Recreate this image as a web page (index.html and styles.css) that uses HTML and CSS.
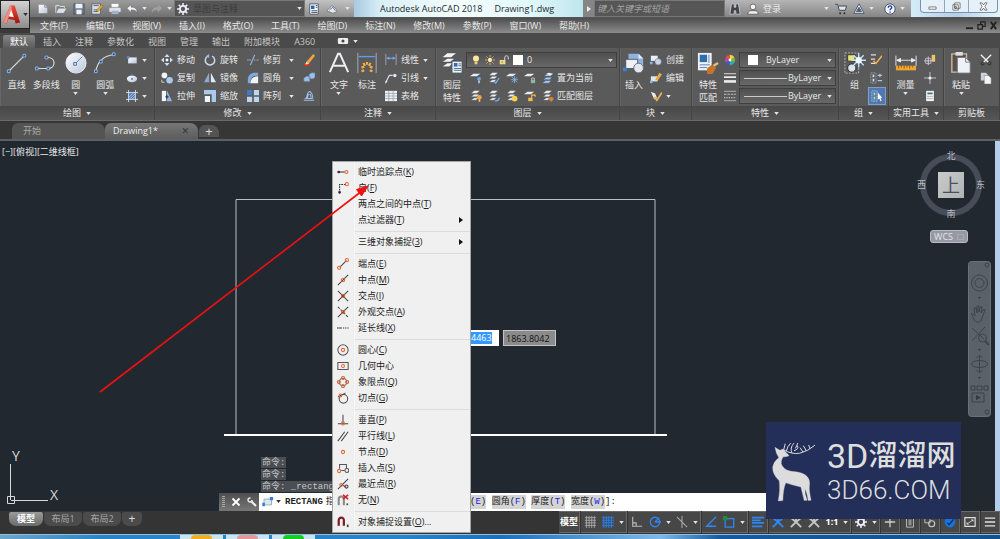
FILE: index.html
```
<!DOCTYPE html>
<html lang="zh-CN">
<head>
<meta charset="utf-8">
<title>Autodesk AutoCAD 2018 - Drawing1.dwg</title>
<link rel="stylesheet" href="styles.css">
</head>
<body>
<svg class="sprite" aria-hidden="true">
  <defs>
    <linearGradient id="g-white" x1="0" y1="0" x2="1" y2="1"><stop offset="0" stop-color="#fff"/><stop offset="1" stop-color="#b9c6d6"/></linearGradient>
    <linearGradient id="g-red" x1="0" y1="0" x2="0" y2="1"><stop offset="0" stop-color="#e8503c"/><stop offset="1" stop-color="#a8100c"/></linearGradient>
  </defs>
  <symbol id="down" viewBox="0 0 6 4"><path d="M0 0h6L3 4z" fill="#e4e4e4"/></symbol>
  <symbol id="new" viewBox="0 0 14 14"><path d="M2 2h7l3 3v7H2z" fill="url(#g-white)"/><path d="M9 2v3h3" fill="none" stroke="#667" stroke-width=".7"/></symbol>
  <symbol id="open" viewBox="0 0 14 14"><path d="M1 12V3h4l1 1h5v2" fill="none" stroke="#e8edf2"/><path d="M1 12l3-6h10l-4 6z" fill="#dbe4ec" stroke="#556" stroke-width=".5"/></symbol>
  <symbol id="save" viewBox="0 0 14 14"><path d="M1 1h12v12H1z" fill="#6d7c90" stroke="#39414d" stroke-width=".7"/><path d="M3 1h8v5H3zM4 8h6v5H4z" fill="#eef2f6"/></symbol>
  <symbol id="saveas" viewBox="0 0 14 14"><path d="M1 1h10v12H1z" fill="#d8dee6" stroke="#39414d" stroke-width=".7"/><path d="M3 3h6M3 8h5M3 10h5" stroke="#456"/><path d="M6 9l6-7 2 2-6 6z" fill="#f1a532" stroke="#7a4a10" stroke-width=".5"/></symbol>
  <symbol id="print" viewBox="0 0 14 14"><path d="M3 1h8v5H3z" fill="#fff"/><path d="M0 5h14v6H0z" fill="#dce2e8" stroke="#556" stroke-width=".6"/><path d="M3 9h8v4H3z" fill="#9fb4cc"/></symbol>
  <symbol id="undo" viewBox="0 0 14 14"><path d="M1 6l5-4v3c5 0 7 2 7 7-1-3-3-4-7-4v3z" fill="#f1f4f7" stroke="#556" stroke-width=".5"/></symbol>
  <symbol id="redo" viewBox="0 0 14 14"><path d="M13 6L8 2v3c-5 0-7 2-7 7 1-3 3-4 7-4v3z" fill="#a0a0a0"/></symbol>
  <symbol id="gear" viewBox="0 0 14 14"><circle cx="7" cy="7" r="3.600" fill="none" stroke="#eef" stroke-width="2.200"/><path d="M7 0v3M7 11v3M0 7h3M11 7h3M2 2l2 2M10 10l2 2M12 2l-2 2M4 10l-2 2" stroke="#eef" stroke-width="1.800"/></symbol>
  <symbol id="sheet" viewBox="0 0 14 14"><path d="M2 1h10v12H2z" fill="#f5f7fa" stroke="#456"/><path d="M3.500 3h4v4h-4z" fill="#2c65a8"/><path d="M9 3h2M9 5h2M4 9h7M4 11h7" stroke="#345"/></symbol>
  <symbol id="plotter" viewBox="0 0 14 14"><path d="M1 9l6-6 4 3 2 4-5 2z" fill="#e1e7ec" stroke="#556" stroke-width=".7"/><path d="M4 8l4-3 3 4" fill="none" stroke="#668"/></symbol>
  <symbol id="binoc" viewBox="0 0 14 14"><path d="M3 1h3v4h2V1h3l2 12H8V9H6v4H1z" fill="#3f4348" stroke="#eee" stroke-width=".7"/></symbol>
  <symbol id="user" viewBox="0 0 14 14"><circle cx="7" cy="4.500" r="3.300" fill="#f5f5f5" stroke="#444" stroke-width=".8"/><path d="M1 13c0-4 3-4 6-4s6 0 6 4z" fill="#f5f5f5" stroke="#444" stroke-width=".8"/></symbol>
  <symbol id="cart" viewBox="0 0 14 14"><path d="M0 1.500h3l2 7h7l1.500-5H4" fill="#dfe6ee" stroke="#3c4550" stroke-width="1.100"/><circle cx="6" cy="12" r="1.200" fill="#333"/><circle cx="11" cy="12" r="1.200" fill="#333"/></symbol>
  <symbol id="share" viewBox="0 0 14 14"><path d="M7 1l6 11H1zM7 5l3 5H4z" fill="#e8eef5" fill-rule="evenodd" stroke="#3c4c66"/><circle cx="7" cy="8" r="1.500" fill="#557"/></symbol>
  <symbol id="help" viewBox="0 0 14 14"><circle cx="7" cy="7" r="6" fill="#f4f7fb" stroke="#32435c"/><path d="M5 5.500C5 2.500 9.200 2.800 9 5.300 8.900 6.800 7 6.800 7 8.600M7 9.800v1.500" fill="none" stroke="#1c3fae" stroke-width="1.600"/></symbol>
  <symbol id="camera" viewBox="0 0 14 8"><rect x="1" y="0" width="12" height="7" rx="1.500" fill="#eee"/><circle cx="7" cy="3.500" r="1.800" fill="#444"/></symbol>

  <symbol id="line" viewBox="0 0 24 24"><path d="M3 21L20 4" stroke="#d6dadd" stroke-width="1.200"/><path d="M1.500 19.500h3v3h-3zM18.500 2.500h3v3h-3z" fill="#2f4a70" stroke="#8fbcf2"/></symbol>
  <symbol id="pline" viewBox="0 0 24 24"><path d="M2 18h12c9 0 9-12 0-12" fill="none" stroke="#d6dadd" stroke-width="1.300"/><path d="M.5 16.500h3v3h-3zM13 16.500h3v3h-3zM11 4.500h3v3h-3z" fill="#2f4a70" stroke="#8fbcf2"/></symbol>
  <symbol id="circle" viewBox="0 0 24 24"><circle cx="12" cy="12" r="11" fill="url(#g-white)" stroke="#eef"/><path d="M11 13l8-8" stroke="#4f83c4"/><path d="M9.500 11.500h3v3h-3z" fill="#dbe9fb" stroke="#3c6fb0"/></symbol>
  <symbol id="arc" viewBox="0 0 24 24"><path d="M2 21C4 10 10 4 22 3" fill="none" stroke="#d6dadd" stroke-width="1.300"/><path d="M.5 19.500h3v3h-3zM6 9h3v3H6zM20 1h3v3h-3z" fill="#2f4a70" stroke="#8fbcf2"/></symbol>
  <symbol id="rect" viewBox="0 0 14 14"><path d="M2.500 4h10v7h-10z" fill="url(#g-white)"/><path d="M1 2.500h3v3H1z" fill="#5b8dcc"/></symbol>
  <symbol id="ellipse" viewBox="0 0 14 14"><ellipse cx="7" cy="8" rx="6" ry="4" fill="url(#g-white)"/><path d="M6 7h2v2H6zM6 2h2v2H6z" fill="#4a80c6"/></symbol>
  <symbol id="hatch" viewBox="0 0 14 14"><path d="M3 3h8v8H3z" fill="#5580b5"/><path d="M3 0v14M11 0v14M0 3h14M0 11h14" stroke="#dce8f6"/><path d="M3 9l6-6M4 11l7-7M7 11l4-4" stroke="#a9caf0"/></symbol>
  <symbol id="move" viewBox="0 0 14 14"><path d="M7 0l3 3.500H4zM7 14l3-3.500H4zM0 7l3.500-3v6zM14 7l-3.500-3v6z" fill="#c9dcf5"/><path d="M5.500 5.500h3v3h-3z" fill="#fff"/></symbol>
  <symbol id="rotate" viewBox="0 0 14 14"><path d="M4.500 2.500a5.500 5.500 0 1 0 5 0" fill="none" stroke="#c9dcf0" stroke-width="1.700"/><path d="M6 0v5L3 2z" fill="#8fbcf2"/></symbol>
  <symbol id="trim" viewBox="0 0 14 14"><path d="M4 13l5-12" stroke="#8fbcf2" stroke-width="1.300"/><path d="M0 7h5M8 7h2M11 7h3" stroke="#aaa"/></symbol>
  <symbol id="erase" viewBox="0 0 14 14"><path d="M4 9l8-9 2 2-7 9z" fill="#f4a33a"/><path d="M4 9l3 2-2 2H2z" fill="#f3e4c8"/><path d="M1 13h7" stroke="#e12e1c" stroke-width="2"/></symbol>
  <symbol id="copy" viewBox="0 0 14 14"><circle cx="4" cy="4" r="3.300" fill="#f0f3f7"/><circle cx="10" cy="9.500" r="3.800" fill="#a9c9f0"/><path d="M1 9v3h3" fill="none" stroke="#ddd"/></symbol>
  <symbol id="mirror" viewBox="0 0 14 14"><path d="M6 1v11H0z" fill="#8fa9c6"/><path d="M8 1v11h6z" fill="#dfe9f4"/></symbol>
  <symbol id="fillet" viewBox="0 0 14 14"><path d="M1 13V9C1 4 5 1 9 1h4v3C8 4 4 6 4 13z" fill="#7fa9da"/><path d="M4 13c0-5 3-8 9-8v8z" fill="#f0f3f6"/></symbol>
  <symbol id="explode" viewBox="0 0 14 14"><path d="M1 7l3-2h4v6H1zM7 3l3-2h4v5l-2 2H7z" fill="#9cc0ea" stroke="#56759c" stroke-width=".6"/></symbol>
  <symbol id="stretch" viewBox="0 0 14 14"><path d="M1 1h5v12H1z" fill="#f2f4f7"/><path d="M7 1l6 12H7z" fill="#8fb5e4"/><path d="M5 8h4M7 6v4" stroke="#222"/></symbol>
  <symbol id="scale" viewBox="0 0 14 14"><path d="M0 0h14v14h-5V5H0z" fill="#a9c9ee"/><path d="M1 7h6v7H1z" fill="#f1f5f9"/></symbol>
  <symbol id="array" viewBox="0 0 14 14"><path d="M0 0h6v6H0z" fill="#4379c4"/><path d="M8 0h6v6H8zM0 8h6v6H0zM8 8h6v6H8z" fill="#bcd5f3"/></symbol>
  <symbol id="offset" viewBox="0 0 14 14"><path d="M1 12h12M3 10c3-2 1-7 4-8s5 6 4 8zM5 10c1-2 0-4 2-5s3 3 2 5" fill="none" stroke="#9bbde6" stroke-width="1.200"/></symbol>

  <symbol id="text" viewBox="0 0 24 24"><path d="M2 22L11 2h2l9 20M5.500 15h13" fill="none" stroke="#eceff2" stroke-width="2.200"/></symbol>
  <symbol id="dim" viewBox="0 0 24 24"><path d="M2 1v22M22 1v22" stroke="#aeb5bc"/><path d="M3 5h18" stroke="#5f9cec" stroke-width="1.500"/><path d="M6 17l3-1M8 12l2 3M12 11v3M16 12l-2 3M18 17l-3-1M6 21l3-1M18 21l-3-1" stroke="#f2ae42" stroke-width="2.400"/></symbol>
  <symbol id="linear" viewBox="0 0 14 14"><path d="M1 0v13M13 0v13" stroke="#aab"/><path d="M2 5h10" stroke="#5f9cec" stroke-width="1.500"/><path d="M2 5l3-2v4zM12 5L9 3v4z" fill="#79adf0"/></symbol>
  <symbol id="leader" viewBox="0 0 14 14"><path d="M1 12L5 4h4" fill="none" stroke="#dde" stroke-width="1.300"/><circle cx="11.500" cy="4" r="2" fill="#dce9f8"/><path d="M0 14l1-4 2 1z" fill="#eee"/></symbol>
  <symbol id="table" viewBox="0 0 14 14"><path d="M0 1h14v12H0z" fill="#eef1f4"/><path d="M0 4h14M0 7h14M0 10h14M4.500 1v12M9.500 1v12" stroke="#8a99aa" stroke-width=".8"/></symbol>
  <symbol id="layerprop" viewBox="0 0 24 24"><path d="M1 6l6-5h10l-6 5zM1 11l6-4h8l-5 4zM1 16l6-4h6l-4 4z" fill="#f1f3f5" stroke="#444" stroke-width=".5"/><path d="M12 10h11v13H12z" fill="#f3f5f8" stroke="#456"/><path d="M14 12h4v4h-4z" fill="#2e6db8"/><path d="M19 13h3M19 15h3M14 18h8M14 20h8" stroke="#468"/></symbol>
  <symbol id="bulb" viewBox="0 0 14 14"><circle cx="7" cy="5" r="4.200" fill="#ffe79a"/><path d="M5 9h4v4H5z" fill="#e4c98a"/></symbol>
  <symbol id="sun" viewBox="0 0 14 14"><circle cx="7" cy="7" r="3" fill="#ffe9a6"/><path d="M7 0v3M7 11v3M0 7h3M11 7h3M2 2l2 2M10 10l2 2M12 2l-2 2M4 10l-2 2" stroke="#f0cf80"/></symbol>
  <symbol id="lock" viewBox="0 0 14 14"><path d="M1 7h8v6H1z" fill="#f1da8a"/><path d="M8 7V4c0-4 5-4 5 0v2" fill="none" stroke="#d7d7d7" stroke-width="1.400"/><path d="M4.500 9v2" stroke="#543"/></symbol>
  <symbol id="stack" viewBox="0 0 14 14"><path d="M1 4l4-3.500h7L8 4zM1 8l4-3h6L8 8zM1 12l4-3h5l-3 3z" fill="#e9edf1" stroke="#41464b" stroke-width=".5"/></symbol>
  <symbol id="lay-off" viewBox="0 0 14 14"><path d="M0 5l4-3h8L8 5z" fill="#e8ecf0"/><circle cx="10.500" cy="8" r="2.300" fill="#69a4ea"/><path d="M9.500 10h2v3h-2z" fill="#a8c8ee"/></symbol>
  <symbol id="lay-iso" viewBox="0 0 14 14"><use href="#stack"/><path d="M7 11l2 2 4-6" fill="none" stroke="#74aef2" stroke-width="1.500"/></symbol>
  <symbol id="lay-frz" viewBox="0 0 14 14"><path d="M0 5l4-3h8L8 5z" fill="#e8ecf0"/><path d="M10 5v8M6 9h8M7 6l6 6M13 6l-6 6" stroke="#7db4f2"/></symbol>
  <symbol id="lay-lock" viewBox="0 0 14 14"><path d="M0 5l4-3h8L8 5z" fill="#e8ecf0"/><path d="M8 9h5v4H8z" fill="#8eb79c"/><path d="M9 9V7h3v2" fill="none" stroke="#ccd"/></symbol>
  <symbol id="lay-cur" viewBox="0 0 14 14"><path d="M2 5l4-3h7l-3 3zM1 9l4-3h7l-3 3zM0 13l4-3h7l-3 3z" fill="#a9c8ee" stroke="#3c4a5a" stroke-width=".5"/><path d="M5 2l3-1 5 1-4 2z" fill="#eee"/></symbol>
  <symbol id="lay-on" viewBox="0 0 14 14"><use href="#stack"/><circle cx="11" cy="8.500" r="2.600" fill="#f5a93c"/><path d="M10 11h2v2.500h-2z" fill="#f3d694"/></symbol>
  <symbol id="lay-uniso" viewBox="0 0 14 14"><use href="#stack"/><path d="M13 9c0 3-2 4-5 4" fill="none" stroke="#74aef2" stroke-width="1.600"/></symbol>
  <symbol id="lay-thaw" viewBox="0 0 14 14"><use href="#stack"/><circle cx="10" cy="10" r="3.400" fill="#f6cf4e"/></symbol>
  <symbol id="lay-unlock" viewBox="0 0 14 14"><path d="M0 5l4-3h8L8 5z" fill="#e8ecf0"/><path d="M5 9h5v4H5z" fill="#f2c04a"/><path d="M9 9V6h4v2" fill="none" stroke="#f2c04a" stroke-width="1.300"/></symbol>
  <symbol id="lay-match" viewBox="0 0 14 14"><use href="#stack"/><path d="M7 10l4-2 3 2-3 4z" fill="#d9842e"/></symbol>
  <symbol id="insert" viewBox="0 0 24 24"><path d="M6 2h11l5 5v11H6z" fill="#8fb3de"/><path d="M17 2v5h5" fill="#e4eefa"/><path d="M3 8h13v10H3z" fill="#eef1f5" stroke="#556"/><circle cx="17" cy="17.500" r="5.300" fill="#e2e7ee" stroke="#667"/><path d="M0 17h4v4H0z" fill="#3f7fd4"/></symbol>
  <symbol id="create" viewBox="0 0 14 14"><path d="M1 2h8v6H1z" fill="#eceff3"/><circle cx="9.500" cy="9" r="3.800" fill="#c5d3e3" stroke="#667" stroke-width=".6"/><path d="M0 9h3v3H0z" fill="#8bb5e8"/></symbol>
  <symbol id="editb" viewBox="0 0 14 14"><path d="M1 5h8v6H1z" fill="#dfe5ec"/><path d="M6 9l5-8 3 2-5 7z" fill="#f0a73e"/><path d="M0 10h3v3H0z" fill="#8bb5e8"/></symbol>
  <symbol id="attr" viewBox="0 0 14 14"><path d="M1 2l5 2 2 5-3 2z" fill="#eee"/><path d="M5 8l3 4 6-9" fill="none" stroke="#f0b350" stroke-width="2"/></symbol>
  <symbol id="matchp" viewBox="0 0 24 24"><path d="M1 1h15v19H1z" fill="#eef1f5"/><path d="M3 3h8v8H3z" fill="#2f6ead"/><path d="M13 3v9M3 14h11M3 17h8" stroke="#557fae"/><path d="M11 18l5-4 5 3-4 7h-6z" fill="#c4752a"/><path d="M18 15l5-3" stroke="#e7c079" stroke-width="2.500"/></symbol>
  <symbol id="wheel" viewBox="0 0 14 14"><path d="M7 7V1a6 6 0 0 1 5.200 3z" fill="#f3d53d"/><path d="M7 7l5.200-3a6 6 0 0 1 0 6z" fill="#6cbf4a"/><path d="M7 7l5.200 3A6 6 0 0 1 7 13z" fill="#39a9b8"/><path d="M7 7v6a6 6 0 0 1-5.200-3z" fill="#3961c4"/><path d="M7 7l-5.200 3a6 6 0 0 1 0-6z" fill="#b04aa8"/><path d="M7 7L1.800 4A6 6 0 0 1 7 1z" fill="#e5533b"/><circle cx="7" cy="7" r="1.700" fill="#fff"/></symbol>
  <symbol id="lw" viewBox="0 0 14 14"><path d="M0 2h14" stroke="#eee"/><path d="M0 6h14" stroke="#eee" stroke-width="2"/><path d="M0 11h14" stroke="#eee" stroke-width="3"/></symbol>
  <symbol id="lt" viewBox="0 0 14 14"><path d="M0 1.500h14M0 12.500h14" stroke="#bbb"/><path d="M0 5h14" stroke="#ccc" stroke-dasharray="3 1"/><path d="M0 9h14" stroke="#ccc" stroke-width="1.500" stroke-dasharray="1 1"/></symbol>
  <symbol id="group" viewBox="0 0 24 24"><path d="M1 1h15v22H1z" fill="none" stroke="#bbb" stroke-dasharray="2 1.500"/><path d="M4 3h8v7H4z" fill="#e9e27a" stroke="#333"/><circle cx="8.500" cy="17.500" r="4.500" fill="#dde5ee" stroke="#222"/><path d="M16 1v16M8 9h16M10.500 3.500l11 11M21.500 3.500l-11 11" stroke="#bfe0ff" stroke-width="1.500"/><circle cx="16" cy="9" r="3.500" fill="#eef8ff"/></symbol>
  <symbol id="ungroup" viewBox="0 0 14 14"><path d="M1 1h6M1 6h5M1 11h5" stroke="#ddd" stroke-width="1.500"/><path d="M4 8l3 3 7-9" fill="none" stroke="#f0b350" stroke-width="1.800"/></symbol>
  <symbol id="gedit" viewBox="0 0 14 14"><path d="M1 1h6v12H1z" fill="none" stroke="#9aa" stroke-dasharray="2 1"/><path d="M3 3h2v3H3zM3 8h2v3H3z" fill="#c9dcf0"/><path d="M9 4h5M11.500 2v4M9 10h5" stroke="#a9c9ee" stroke-width="1.300"/></symbol>
  <symbol id="gsel" viewBox="0 0 14 14"><path d="M1 1h6v12H1z" fill="none" stroke="#cde" stroke-dasharray="1 1"/><path d="M3 3h2v3H3zM3 8h2v3H3z" fill="#a4d8a0"/><path d="M8 3l5 6-2 .3 1.500 3-1.500.7L9.700 10 8 11z" fill="#fff"/></symbol>
  <symbol id="measure" viewBox="0 0 24 24"><path d="M1 4v11M23 4v11" stroke="#eee"/><path d="M2 9h20M2 9l4-2v4zM22 9l-4-2v4z" stroke="#e9edf2" fill="#eee"/><path d="M1 15h22v5H1z" fill="#f0a632"/><path d="M4 15v3M7 15v2M10 15v3M13 15v2M16 15v3M19 15v2" stroke="#8b5e14"/></symbol>
  <symbol id="qselect" viewBox="0 0 14 14"><path d="M5 3v10M0 8h10" stroke="#ddd"/><path d="M2 5h6v6H2z" fill="none" stroke="#cbd"/><path d="M9 1h4v8H9z" fill="#f2c46f"/></symbol>
  <symbol id="idpoint" viewBox="0 0 14 14"><path d="M7 0v14M0 7h14" stroke="#c9d3dd"/><circle cx="7" cy="7" r="1.800" fill="#eef"/></symbol>
  <symbol id="calc" viewBox="0 0 14 14"><path d="M2.500 1h9v12h-9z" fill="#f0f2f5"/><path d="M4 3h6v2H4z" fill="#567"/><path d="M4 7.500h6M4 10h6" stroke="#789" stroke-dasharray="1.400 1"/></symbol>
  <symbol id="paste" viewBox="0 0 24 24"><path d="M2 2h16v20H2z" fill="#5c5249" stroke="#c8bba8" stroke-width="1.500"/><path d="M6 0h8v4H6z" fill="#ddd"/><path d="M8 6h9l5 5v12H8z" fill="#eef1f5" stroke="#778"/><path d="M17 6v5h5" fill="none" stroke="#778"/></symbol>
  <symbol id="cut" viewBox="0 0 14 14"><path d="M1 1l9 9M13 1L4 10" stroke="#eee" stroke-width="1.600"/><circle cx="3" cy="11" r="1.800" fill="none" stroke="#222"/><circle cx="11" cy="11" r="1.800" fill="none" stroke="#222"/></symbol>
  <symbol id="clip" viewBox="0 0 14 14"><path d="M1 1h6l2 2v7H1z" fill="#ccd3da"/><path d="M5 4h5l3 3v7H5z" fill="#f4f5f7" stroke="#667" stroke-width=".5"/></symbol>

  <symbol id="o-track" viewBox="0 0 14 14"><path d="M1 7h8" stroke="#333" stroke-width="1.200"/><circle cx="2" cy="7" r="1" fill="#333" stroke="#333"/><circle cx="11" cy="7" r="1.800"/></symbol>
  <symbol id="o-from" viewBox="0 0 14 14"><path d="M3 13V3h7" stroke="#333" stroke-dasharray="2 1"/><circle cx="3" cy="12" r="1" fill="#333" stroke="#333"/><circle cx="11.500" cy="2.500" r="1.800"/></symbol>
  <symbol id="o-end" viewBox="0 0 14 14"><path d="M3 11l8-8" stroke="#444"/><circle cx="2.500" cy="11.500" r="1.900"/><circle cx="11.500" cy="2.500" r="1.900"/></symbol>
  <symbol id="o-mid" viewBox="0 0 14 14"><path d="M1 13L13 1" stroke="#444"/><circle cx="7" cy="7" r="2"/></symbol>
  <symbol id="o-int" viewBox="0 0 14 14"><path d="M1 1l12 12M13 1L1 13" stroke="#444"/><circle cx="7" cy="7" r="1.900"/></symbol>
  <symbol id="o-app" viewBox="0 0 14 14"><path d="M1 1l12 12" stroke="#444" stroke-dasharray="3 1.500"/><path d="M13 1L1 13" stroke="#444"/><circle cx="7" cy="7" r="1.900"/></symbol>
  <symbol id="o-ext" viewBox="0 0 14 14"><path d="M0 7h6" stroke="#444"/><path d="M7 7h7" stroke="#444" stroke-dasharray="1.500 1"/></symbol>
  <symbol id="o-cen" viewBox="0 0 14 14"><circle cx="7" cy="7" r="6" stroke="#555"/><circle cx="7" cy="7" r="1.900"/></symbol>
  <symbol id="o-geo" viewBox="0 0 14 14"><path d="M1 3h12v8H1z" stroke="#555"/><circle cx="7" cy="7" r="1.700"/></symbol>
  <symbol id="o-quad" viewBox="0 0 14 14"><circle cx="7" cy="7" r="4.500" stroke="#555"/><circle cx="7" cy="2.200" r="1.800"/><circle cx="7" cy="11.800" r="1.800"/><circle cx="2.200" cy="7" r="1.800"/><circle cx="11.800" cy="7" r="1.800"/></symbol>
  <symbol id="o-tan" viewBox="0 0 14 14"><circle cx="7.500" cy="8" r="5" stroke="#444"/><path d="M1 6l9-5" stroke="#444"/><circle cx="4" cy="4" r="1.700"/></symbol>
  <symbol id="o-per" viewBox="0 0 14 14"><path d="M7 1v9M1 11.500h12" stroke="#444"/><circle cx="7" cy="11" r="1.800"/></symbol>
  <symbol id="o-par" viewBox="0 0 14 14"><path d="M1 13L9 2M5 13l8-11" stroke="#444"/></symbol>
  <symbol id="o-node" viewBox="0 0 14 14"><circle cx="7" cy="7" r="1.900"/></symbol>
  <symbol id="o-ins" viewBox="0 0 14 14"><path d="M3 8V3h8v4M5 10h4" stroke="#555"/><circle cx="11.500" cy="10" r="2.300" stroke="#555"/><circle cx="2.500" cy="10.500" r="1.900"/></symbol>
  <symbol id="o-near" viewBox="0 0 14 14"><path d="M1 13L13 1" stroke="#444"/><path d="M6 8l5 3" stroke="#444"/><circle cx="5" cy="8" r="1.700"/><circle cx="11" cy="10" r="1.900" stroke="#444"/></symbol>
  <symbol id="o-none" viewBox="0 0 14 14"><path d="M2 13V6c0-4 6-4 6 0v7" stroke="#8a8a8a" stroke-width="2.400"/><path d="M7 1l6 5M13 1L7 6" stroke="#d6202a" stroke-width="1.800"/><path d="M12 11v2" stroke="#444" stroke-width="2"/></symbol>
  <symbol id="o-set" viewBox="0 0 14 14"><path d="M2 12V5c0-4 6-4 6 0v7" stroke="#7c2024" stroke-width="2.600"/><path d="M.7 12h2.600M6.700 12h2.600" stroke="#eee" stroke-width="1.500"/><path d="M12.500 10v3" stroke="#444" stroke-width="2"/></symbol>

  <symbol id="s-grid" viewBox="0 0 14 14"><path d="M3 0v14M6 0v14M9 0v14M12 0v14M1 2h13M1 5h13M1 8h13M1 11h13" stroke="#b5b5b5" stroke-width=".9"/></symbol>
  <symbol id="s-snap" viewBox="0 0 14 14"><path d="M2 0v14M5 0v14M8 0v14M11 0v14M0 2h14M0 5h14M0 8h14M0 11h14" stroke="#2c7be0" stroke-width="1.200"/></symbol>
  <symbol id="s-ortho" viewBox="0 0 14 14"><path d="M2 1v11h11M2 8h4v4" fill="none" stroke="#bbb" stroke-width="1.300"/></symbol>
  <symbol id="s-polar" viewBox="0 0 14 14"><circle cx="7" cy="7" r="5.500" fill="none" stroke="#2f86ee" stroke-width="1.600"/><path d="M7 7h7M7 7l5-5" stroke="#2f86ee" stroke-width="1.500"/></symbol>
  <symbol id="s-iso" viewBox="0 0 14 14"><path d="M1 1l12 12M7 0v14" stroke="#aaa" stroke-width="1.200"/></symbol>
  <symbol id="s-angle" viewBox="0 0 14 14"><path d="M13 1L2 12h11" fill="none" stroke="#2f86ee" stroke-width="1.600"/><circle cx="7" cy="12" r="1.300" fill="#2f86ee"/></symbol>
  <symbol id="s-osnap" viewBox="0 0 14 14"><path d="M2.500 3h10v10h-10z" fill="none" stroke="#2f86ee" stroke-width="1.500"/><path d="M0 0h5v5H0z" fill="#1f8b3c"/></symbol>
  <symbol id="s-lines" viewBox="0 0 14 14"><path d="M0 2h14M0 5h10M0 8h14M0 12h12" stroke="#2f86ee" stroke-width="2"/></symbol>
  <symbol id="s-ann" viewBox="0 0 14 14"><path d="M7 1v7M7 7l-6 6M7 7l6 6M2 3l5 4 5-4" fill="none" stroke="currentColor" stroke-width="2.200"/></symbol>
  <symbol id="s-plus" viewBox="0 0 14 14"><path d="M7 1v12M1 7h12" stroke="#ccc" stroke-width="1.500"/></symbol>
  <symbol id="s-trash" viewBox="0 0 14 14"><path d="M3 2h8v11H3zM6 4v7M8 4v7" fill="none" stroke="#ccc"/></symbol>
  <symbol id="s-shapes" viewBox="0 0 14 14"><path d="M1 2h6v6H1z" fill="none" stroke="#ccc"/><circle cx="9" cy="9" r="3.500" fill="none" stroke="#ccc" stroke-width="1.300"/></symbol>
  <symbol id="s-hw" viewBox="0 0 14 14"><circle cx="7" cy="7" r="6.300" fill="#1473dc"/><path d="M4 8l2 2 5-6" fill="none" stroke="#08294f" stroke-width="1.500"/></symbol>
  <symbol id="s-full" viewBox="0 0 14 14"><path d="M1 2h12v10H1z" fill="none" stroke="#ddd" stroke-width="1.400"/><path d="M3 10V7l3 3zM11 4v3L8 4z" fill="#ddd"/><path d="M4 9l6-4" stroke="#ddd"/></symbol>
  <symbol id="s-menu" viewBox="0 0 14 14"><path d="M1 2.500h12M1 7h12M1 11.500h12" stroke="#e2e2e2" stroke-width="1.500"/></symbol>
</svg>

<header class="header">
  <button class="app-button" aria-label="应用程序菜单">
    <svg class="logo" viewBox="0 0 20 22"><path d="M8 1h5l6 19-5 1-1-4-7-1-2 5-4-1z" fill="url(#g-red)"/><path d="M9 5l-3 8 6 1z" fill="#fff"/><path d="M0 20l8-19 2 2-6 18z" fill="#f08b7c"/></svg>
    <svg class="arrow dark"><use href="#down"/></svg>
  </button>
  <div class="titlebar">
    <div class="quick">
      <button aria-label="新建"><svg class="ic"><use href="#new"/></svg></button>
      <button aria-label="打开"><svg class="ic"><use href="#open"/></svg></button>
      <button aria-label="保存"><svg class="ic"><use href="#save"/></svg></button>
      <button aria-label="另存为"><svg class="ic"><use href="#saveas"/></svg></button>
      <button aria-label="打印"><svg class="ic"><use href="#print"/></svg></button>
      <button class="split" aria-label="放弃"><svg class="ic"><use href="#undo"/></svg><svg class="arrow"><use href="#down"/></svg></button>
      <button class="split" aria-label="重做"><svg class="ic"><use href="#redo"/></svg><svg class="arrow"><use href="#down"/></svg></button>
    </div>
    <div class="workspace"><svg class="ic"><use href="#gear"/></svg>
      <select aria-label="工作空间"><option>草图与注释</option></select><svg class="arrow"><use href="#down"/></svg></div>
    <div class="quick-end">
      <button aria-label="图纸集"><svg class="ic"><use href="#sheet"/></svg></button>
      <button aria-label="批处理打印"><svg class="ic"><use href="#plotter"/></svg></button>
      <button class="narrow" aria-label="自定义"><svg class="arrow"><use href="#down"/></svg></button>
    </div>
    <h1 class="title"><span>Autodesk AutoCAD 2018</span><span>Drawing1.dwg</span></h1>
    <button class="expand" aria-label="展开"><svg viewBox="0 0 4 6"><path d="M0 0l4 3-4 3z" fill="#eee"/></svg></button>
    <input class="search" type="text" placeholder="键入关键字或短语" aria-label="搜索">
    <div class="info">
      <button aria-label="搜索"><svg class="ic"><use href="#binoc"/></svg></button>
      <button class="login"><svg class="ic"><use href="#user"/></svg>登录<svg class="arrow"><use href="#down"/></svg></button>
      <button aria-label="应用商店"><svg class="ic"><use href="#cart"/></svg></button>
      <button class="split" aria-label="保持连接"><svg class="ic"><use href="#share"/></svg><svg class="arrow"><use href="#down"/></svg></button>
      <button class="split help" aria-label="帮助"><svg class="ic"><use href="#help"/></svg><svg class="arrow"><use href="#down"/></svg></button>
    </div>
    <div class="aero">
      <div class="window-buttons">
        <button aria-label="最小化"><svg viewBox="0 0 10 10"><path d="M1 5.500h8v2.500H1z" fill="#fff" stroke="#555" stroke-width=".8"/></svg></button>
        <button aria-label="还原"><svg viewBox="0 0 10 10"><path d="M3 1h6v6H3zM1 3h6v6H1zM3 5h2v2H3z" fill="#fff" stroke="#555" stroke-width=".8"/></svg></button>
        <button class="close" aria-label="关闭"><svg viewBox="0 0 10 10"><path d="M1 1h2.500L5 3.300 6.500 1H9L6.500 5 9 9H6.500L5 6.700 3.500 9H1l2.500-4z" fill="#fff" stroke="#555" stroke-width=".8"/></svg></button>
      </div>
    </div>
  </div>
  <nav class="menubar">
    <button>文件(F)</button><button>编辑(E)</button><button>视图(V)</button><button>插入(I)</button><button>格式(O)</button><button>工具(T)</button><button>绘图(D)</button><button>标注(N)</button><button>修改(M)</button><button>参数(P)</button><button>窗口(W)</button><button>帮助(H)</button>
    <div class="mdi">
      <button aria-label="最小化文档"><svg viewBox="0 0 10 10"><path d="M1 8h8" stroke="#222" stroke-width="2"/></svg></button>
      <button aria-label="还原文档"><svg viewBox="0 0 10 10"><path d="M4 4V1h5v5H6M1 4h5v5H1z" fill="none" stroke="#222" stroke-width="1.300"/></svg></button>
      <button aria-label="关闭文档"><svg viewBox="0 0 10 10"><path d="M2 1l6 8M8 1L2 9" stroke="#222" stroke-width="2"/></svg></button>
    </div>
  </nav>
</header>

<nav class="tabs">
  <button class="active">默认</button><button>插入</button><button>注释</button><button>参数化</button><button>视图</button><button>管理</button><button>输出</button><button>附加模块</button><button>A360</button>
  <button class="cam" aria-label="功能区选项"><svg class="camera"><use href="#camera"/></svg><svg class="arrow"><use href="#down"/></svg></button>
</nav>

<main class="ribbon">
  <section class="panel">
    <div class="tools">
      <button class="big"><svg><use href="#line"/></svg>直线</button>
      <button class="big"><svg><use href="#pline"/></svg>多段线</button>
      <button class="big"><svg><use href="#circle"/></svg>圆<svg class="arrow"><use href="#down"/></svg></button>
      <button class="big"><svg><use href="#arc"/></svg>圆弧<svg class="arrow"><use href="#down"/></svg></button>
      <div class="col last">
        <button aria-label="矩形"><svg class="ic"><use href="#rect"/></svg><svg class="arrow"><use href="#down"/></svg></button>
        <button aria-label="椭圆"><svg class="ic"><use href="#ellipse"/></svg><svg class="arrow"><use href="#down"/></svg></button>
        <button aria-label="图案填充"><svg class="ic"><use href="#hatch"/></svg><svg class="arrow"><use href="#down"/></svg></button>
      </div>
    </div>
    <h2>绘图<svg class="arrow"><use href="#down"/></svg></h2>
  </section>
  <section class="panel">
    <div class="tools">
      <div class="col"><button><svg class="ic"><use href="#move"/></svg>移动</button><button><svg class="ic"><use href="#copy"/></svg>复制</button><button><svg class="ic"><use href="#stretch"/></svg>拉伸</button></div>
      <div class="col"><button><svg class="ic"><use href="#rotate"/></svg>旋转</button><button><svg class="ic"><use href="#mirror"/></svg>镜像</button><button><svg class="ic"><use href="#scale"/></svg>缩放</button></div>
      <div class="col wide-arrow"><button><svg class="ic"><use href="#trim"/></svg>修剪<svg class="arrow"><use href="#down"/></svg></button><button><svg class="ic"><use href="#fillet"/></svg>圆角<svg class="arrow"><use href="#down"/></svg></button><button><svg class="ic"><use href="#array"/></svg>阵列<svg class="arrow"><use href="#down"/></svg></button></div>
      <div class="col"><button aria-label="删除"><svg class="ic"><use href="#erase"/></svg></button><button aria-label="分解"><svg class="ic"><use href="#explode"/></svg></button><button aria-label="偏移"><svg class="ic"><use href="#offset"/></svg></button></div>
    </div>
    <h2>修改<svg class="arrow"><use href="#down"/></svg></h2>
  </section>
  <section class="panel">
    <div class="tools spaced">
      <button class="big"><svg><use href="#text"/></svg>文字<svg class="arrow"><use href="#down"/></svg></button>
      <button class="big"><svg><use href="#dim"/></svg>标注</button>
      <div class="col"><button><svg class="ic"><use href="#linear"/></svg>线性<svg class="arrow"><use href="#down"/></svg></button><button><svg class="ic"><use href="#leader"/></svg>引线<svg class="arrow"><use href="#down"/></svg></button><button><svg class="ic"><use href="#table"/></svg>表格</button></div>
    </div>
    <h2>注释<svg class="arrow"><use href="#down"/></svg></h2>
  </section>
  <section class="panel">
    <div class="tools">
      <button class="big slim"><svg><use href="#layerprop"/></svg>图层<br>特性</button>
      <div class="col grow">
        <div class="combo layer"><svg class="ic"><use href="#bulb"/></svg><svg class="ic"><use href="#sun"/></svg><svg class="ic"><use href="#lock"/></svg><i class="swatch"></i><select aria-label="图层"><option>0</option></select><svg class="arrow"><use href="#down"/></svg></div>
        <div class="icons"><button aria-label="关"><svg class="ic"><use href="#lay-off"/></svg></button><button aria-label="隔离"><svg class="ic"><use href="#lay-iso"/></svg></button><button aria-label="冻结"><svg class="ic"><use href="#lay-frz"/></svg></button><button aria-label="锁定"><svg class="ic"><use href="#lay-lock"/></svg></button><button><svg class="ic"><use href="#lay-cur"/></svg>置为当前</button></div>
        <div class="icons"><button aria-label="打开所有图层"><svg class="ic"><use href="#lay-on"/></svg></button><button aria-label="取消隔离"><svg class="ic"><use href="#lay-uniso"/></svg></button><button aria-label="解冻所有图层"><svg class="ic"><use href="#lay-thaw"/></svg></button><button aria-label="解锁"><svg class="ic"><use href="#lay-unlock"/></svg></button><button><svg class="ic"><use href="#lay-match"/></svg>匹配图层</button></div>
      </div>
    </div>
    <h2>图层<svg class="arrow"><use href="#down"/></svg></h2>
  </section>
  <section class="panel">
    <div class="tools">
      <button class="big"><svg><use href="#insert"/></svg>插入</button>
      <div class="col"><button><svg class="ic"><use href="#create"/></svg>创建</button><button><svg class="ic"><use href="#editb"/></svg>编辑</button><button aria-label="编辑属性"><svg class="ic"><use href="#attr"/></svg><svg class="arrow"><use href="#down"/></svg></button></div>
    </div>
    <h2>块<svg class="arrow"><use href="#down"/></svg></h2>
  </section>
  <section class="panel">
    <div class="tools">
      <button class="big slim"><svg><use href="#matchp"/></svg>特性<br>匹配</button>
      <div class="col tight"><button aria-label="颜色"><svg class="ic"><use href="#wheel"/></svg></button><button aria-label="线宽"><svg class="ic"><use href="#lw"/></svg></button><button aria-label="线型"><svg class="ic"><use href="#lt"/></svg></button></div>
      <div class="col grow">
        <div class="combo color"><i class="swatch"></i><select aria-label="对象颜色"><option>ByLayer</option></select><svg class="arrow"><use href="#down"/></svg></div>
        <div class="combo sampled"><i class="sample"></i><select aria-label="线宽"><option>ByLayer</option></select><svg class="arrow"><use href="#down"/></svg></div>
        <div class="combo sampled"><i class="sample"></i><select aria-label="线型"><option>ByLayer</option></select><svg class="arrow"><use href="#down"/></svg></div>
      </div>
    </div>
    <h2>特性<svg class="arrow"><use href="#down"/></svg></h2>
  </section>
  <section class="panel">
    <div class="tools">
      <button class="big slim"><svg><use href="#group"/></svg>组</button>
      <div class="col tight"><button aria-label="解除编组"><svg class="ic"><use href="#ungroup"/></svg></button><button aria-label="组编辑"><svg class="ic"><use href="#gedit"/></svg></button><button class="pressed" aria-label="启用组选择"><svg class="ic"><use href="#gsel"/></svg></button></div>
    </div>
    <h2>组<svg class="arrow"><use href="#down"/></svg></h2>
  </section>
  <section class="panel">
    <div class="tools">
      <button class="big"><svg><use href="#measure"/></svg>测量<svg class="arrow"><use href="#down"/></svg></button>
      <div class="col"><button aria-label="快速选择"><svg class="ic"><use href="#qselect"/></svg></button><button aria-label="点坐标"><svg class="ic"><use href="#idpoint"/></svg></button><button aria-label="计算器"><svg class="ic"><use href="#calc"/></svg></button></div>
    </div>
    <h2>实用工具<svg class="arrow"><use href="#down"/></svg></h2>
  </section>
  <section class="panel">
    <div class="tools">
      <button class="big"><svg><use href="#paste"/></svg>粘贴<svg class="arrow"><use href="#down"/></svg></button>
      <div class="col"><button aria-label="剪切"><svg class="ic"><use href="#cut"/></svg></button><button aria-label="复制剪裁"><svg class="ic"><use href="#clip"/></svg></button></div>
    </div>
    <h2>剪贴板</h2>
  </section>
</main>

<nav class="files">
  <button class="file">开始</button>
  <button class="file active">Drawing1*<span class="x">✕</span></button>
  <button class="file add" aria-label="新图形">+</button>
</nav>

<div class="canvas">
  <p class="view-label">[−][俯视][二维线框]</p>
  <svg class="drawing">
    <path d="M236 293V58.500h419V293" fill="none" stroke="#b9bdc1"/>
    <path d="M224 294h443" stroke="#fff" stroke-width="2"/>
  </svg>
  <svg class="ucs" viewBox="0 0 64 64">
    <path d="M10.500 53V17M11 53.500h37M7.500 49.500h7v7h-7z" fill="none" stroke="#d5d8da"/>
    <text x="12" y="14">Y</text><text x="50" y="53">X</text>
  </svg>
  <div class="dynamic">
    <div class="dyn-first"><input type="text" value="4463" aria-label="X 坐标"></div>
    <input class="dyn-second" type="text" value="1863.8042" aria-label="Y 坐标">
  </div>
  <div class="viewcube">
    <span class="n">北</span><span class="w">西</span><span class="ring"><button>上</button></span><span class="e">东</span><span class="s">南</span>
  </div>
  <button class="wcs">WCS <i></i></button>
  <svg class="navbar" viewBox="0 0 23 156">
    <rect x=".5" y=".5" width="22" height="155" rx="3" fill="#5b6168" stroke="#6b7178"/>
    <g fill="none" stroke="#3d434a">
      <circle cx="19" cy="4" r="2"/><circle cx="19" cy="151" r="2"/>
      <circle cx="11.500" cy="22" r="8"/><circle cx="11.500" cy="22" r="4.500"/>
      <path d="M6 58c-3-5-3-6-1-5l2 2-1-8 2 0 1 5V45h2v6l1-5h2l-1 6 3-4 1 1-3 8c-1 3-1 4-4 4s-4-1-4-3z"/>
      <path d="M4 67l12 11M17 66L4 80"/><circle cx="14.500" cy="77" r="4"/><path d="M17 80l4 4" stroke-width="2"/>
      <path d="M11.500 94v18M8.500 97l3-3 3 3M8.500 109l3 3 3-3"/><ellipse cx="11.500" cy="103" rx="8" ry="3.500"/>
      <path d="M3 125h4v4H3zM9 125h5v4H9zM16 125h4v4h-4zM4 132h12v9H4z"/>
    </g>
    <path d="M10 36h3l-1.500 2zM10 88h3l-1.500 2zM10 116h3l-1.500 2zM8 134l5 2.500-5 2.500z" fill="#343a40"/>
  </svg>
  <div class="command">
    <div class="history"><p>命令:</p><p>命令:</p><p>命令: _rectang</p></div>
    <div class="prompt">
      <div class="handle"><i class="grip"></i><button aria-label="关闭命令行"><svg viewBox="0 0 10 10"><path d="M1.500 1.500l7 7M8.500 1.500l-7 7" stroke="#fff" stroke-width="1.800"/></svg></button><button aria-label="自定义"><svg viewBox="0 0 10 10"><path d="M9 9L4 4" stroke="#eee" stroke-width="2.200"/><circle cx="3" cy="3" r="2" fill="none" stroke="#eee" stroke-width="1.400" stroke-dasharray="9 4"/></svg></button></div>
      <div class="line"><div class="entry"><svg class="recent" viewBox="0 0 16 12"><path d="M2 2.500h9v7H2z" fill="#dfe6ef" stroke="#8aa"/><path d="M0 7h3v4H0zM9 0h4v4H9z" fill="#3d78d8"/></svg><svg class="arrow dark"><use href="#down"/></svg><b>RECTANG</b><span class="ask">指</span></div><div class="options"><button>(<em>E</em>)</button> <button>圆角(<em>F</em>)</button> <button>厚度(<em>T</em>)</button> <button>宽度(<em>W</em>)</button>]:</div></div>
    </div>
  </div>
</div>

<footer class="status">
  <button class="layout active">模型</button><button class="layout">布局1</button><button class="layout">布局2</button><button class="layout add" aria-label="新建布局">+</button>
  <div class="toggles">
    <div><button class="model">模型</button></div>
    <div><button aria-label="栅格"><svg><use href="#s-grid"/></svg></button><button aria-label="捕捉"><svg><use href="#s-snap"/></svg></button><button class="dd" aria-label="捕捉选项"><svg><use href="#down"/></svg></button></div>
    <div><button aria-label="正交"><svg><use href="#s-ortho"/></svg></button><button aria-label="极轴"><svg><use href="#s-polar"/></svg></button><button class="dd" aria-label="极轴选项"><svg><use href="#down"/></svg></button><button aria-label="等轴测"><svg><use href="#s-iso"/></svg></button><button class="dd" aria-label="等轴测选项"><svg><use href="#down"/></svg></button></div>
    <div><button aria-label="对象捕捉追踪"><svg><use href="#s-angle"/></svg></button><button aria-label="对象捕捉"><svg><use href="#s-osnap"/></svg></button><button class="dd" aria-label="捕捉模式"><svg><use href="#down"/></svg></button></div>
    <div><button aria-label="线宽"><svg><use href="#s-lines"/></svg></button></div>
    <div><button class="on" aria-label="注释可见性"><svg><use href="#s-ann"/></svg></button><button aria-label="自动缩放"><svg><use href="#s-ann"/></svg></button><button aria-label="注释比例"><svg><use href="#s-ann"/></svg></button><button class="ratio">1:1</button><button class="dd" aria-label="比例"><svg><use href="#down"/></svg></button></div>
    <div><button aria-label="切换工作空间"><svg><use href="#gear"/></svg></button><button class="dd" aria-label="工作空间选项"><svg><use href="#down"/></svg></button></div>
    <div><button aria-label="注释监视器"><svg><use href="#s-plus"/></svg></button></div>
    <div><button aria-label="单位"><svg><use href="#s-trash"/></svg></button></div>
    <div><button aria-label="隔离对象"><svg><use href="#s-shapes"/></svg></button></div>
    <div><button aria-label="硬件加速"><svg><use href="#s-hw"/></svg></button></div>
    <div><button aria-label="全屏"><svg><use href="#s-full"/></svg></button></div>
    <div><button aria-label="自定义"><svg><use href="#s-menu"/></svg></button></div>
  </div>
</footer>
<div class="taskbar"><i class="task amber"></i><i class="task red"></i><i class="task green"></i></div>

<ul class="context" role="menu">
  <li><button><svg><use href="#o-track"/></svg><span>临时追踪点(<u>K</u>)</span></button></li>
  <li><button><svg><use href="#o-from"/></svg><span>自(<u>F</u>)</span></button></li>
  <li><button><svg></svg><span>两点之间的中点(<u>T</u>)</span></button></li>
  <li><button class="sub"><svg></svg><span>点过滤器(<u>T</u>)</span></button></li>
  <li class="sep"></li>
  <li><button class="sub"><svg></svg><span>三维对象捕捉(<u>3</u>)</span></button></li>
  <li class="sep"></li>
  <li><button><svg><use href="#o-end"/></svg><span>端点(<u>E</u>)</span></button></li>
  <li><button><svg><use href="#o-mid"/></svg><span>中点(<u>M</u>)</span></button></li>
  <li><button><svg><use href="#o-int"/></svg><span>交点(<u>I</u>)</span></button></li>
  <li><button><svg><use href="#o-app"/></svg><span>外观交点(<u>A</u>)</span></button></li>
  <li><button><svg><use href="#o-ext"/></svg><span>延长线(<u>X</u>)</span></button></li>
  <li class="sep"></li>
  <li><button><svg><use href="#o-cen"/></svg><span>圆心(<u>C</u>)</span></button></li>
  <li><button><svg><use href="#o-geo"/></svg><span>几何中心</span></button></li>
  <li><button><svg><use href="#o-quad"/></svg><span>象限点(<u>Q</u>)</span></button></li>
  <li><button><svg><use href="#o-tan"/></svg><span>切点(<u>G</u>)</span></button></li>
  <li class="sep"></li>
  <li><button><svg><use href="#o-per"/></svg><span>垂直(<u>P</u>)</span></button></li>
  <li><button><svg><use href="#o-par"/></svg><span>平行线(<u>L</u>)</span></button></li>
  <li><button><svg><use href="#o-node"/></svg><span>节点(<u>D</u>)</span></button></li>
  <li><button><svg><use href="#o-ins"/></svg><span>插入点(<u>S</u>)</span></button></li>
  <li><button><svg><use href="#o-near"/></svg><span>最近点(<u>R</u>)</span></button></li>
  <li><button><svg><use href="#o-none"/></svg><span>无(<u>N</u>)</span></button></li>
  <li class="sep"></li>
  <li><button><svg><use href="#o-set"/></svg><span>对象捕捉设置(<u>O</u>)...</span></button></li>
</ul>

<svg class="pointer"><path d="M100 392L360 192.500" stroke="#f01010" stroke-width="1.600"/><path d="M368 186l-6.500 10-5-6.500z" fill="#f01010" stroke="#f01010"/></svg>

<div class="brand">
  <svg viewBox="20 48 140 188"><g fill="#dcdcdc" stroke="#dcdcdc" stroke-linejoin="round">
    <path d="M29 70L44 79 54 75Q60 84 72 95 68 99 54 99 47 108 48 120 54 138 78 143 108 144 124 156 137 168 134 186 132 200 139 231L130 232Q127 208 120 196 119 212 127 231L118 232Q112 208 108 191 82 185 62 178 54 195 53 232L39 233Q46 200 42 172 21 152 22 130 26 112 41 102 32 90 29 70Z"/>
    <path d="M56 78Q80 92 104 88 130 82 150 64M56 76L60 60M64 80Q66 68 76 58M80 86Q74 72 86 58M92 72L98 58M88 80Q102 76 98 66M114 84L106 72M124 80L116 66M136 74L132 64" fill="none" stroke-width="3" stroke-linecap="round"/>
  </g></svg>
  <div><strong><span class="latin">3D</span><span>溜溜网</span></strong><span class="domain">3D66.COM</span></div>
</div>
</body>
</html>
```

FILE: styles.css
```
* { box-sizing: border-box; }
html { height: 100%; }
body {
  position: relative;
  display: flex;
  flex-direction: column;
  height: 100%;
  margin: 0;
  overflow: hidden;
  background: #212830;
  color: #e8e8e8;
  font: 9px/12px "Open Sans", "Noto Sans CJK SC", sans-serif;
}
button, select, input { margin: 0; padding: 0; border: 0; background: none; color: inherit; font: inherit; }
button { display: flex; align-items: center; justify-content: center; white-space: nowrap; }
select { appearance: none; min-width: 0; }
h1, h2, p, ul { margin: 0; padding: 0; font: inherit; list-style: none; }
svg { flex: none; overflow: visible; }
.sprite { position: absolute; width: 0; height: 0; }
.ic { width: 12px; height: 12px; }
.arrow { width: 5px; height: 3px; }
.dark { filter: brightness(0.2); }

/* Title and menu bars */
.header { display: grid; grid-template-columns: 30px 1fr; grid-template-rows: 18px 15px; flex: none; background: #3a3a3a; }
.app-button { grid-row: 1 / 3; align-self: start; gap: 2px; height: 29px; border: 1px solid #222; background: linear-gradient(#d2d2d2, #8d8d8d); }
.logo { width: 18px; height: 21px; }
.titlebar { display: flex; align-items: stretch; min-width: 0; border-bottom: 1px solid #555; background: linear-gradient(#9c9c9c, #707070); }
.quick { display: flex; align-items: center; width: 144px; padding-left: 4px; }
.quick button, .quick-end button, .info button { width: 18px; height: 16px; }
.quick .split { width: 25px; gap: 4px; }
.workspace { display: flex; align-items: center; gap: 4px; width: 131px; padding: 0 2px; border: 1px solid #777; background: #555; color: #3d3d3d; }
.workspace select { flex: 1; }
.quick-end { display: flex; align-items: center; width: 49px; background: linear-gradient(#c2c2c2, #8f8f8f); }
.quick-end .narrow { width: 13px; }
.title { display: flex; flex: 1; align-items: center; gap: 12px; padding-left: 26px; background: linear-gradient(90deg, #a9c9e2, #d9f0f6 12%, #f4fdff 45%, #e3f9fb 75%, #bfe6ee); color: #1d2730; white-space: nowrap; }
.expand { width: 11px; background: #858585; }
.expand svg { width: 4px; height: 6px; }
.search { width: 131px; padding-left: 2px; border: 1px solid #777; background: #565656; font-style: italic; }
.search::placeholder { color: #a4a4a4; opacity: 1; }
.info { display: flex; align-items: center; width: 186px; padding-left: 1px; background: linear-gradient(#b5b5b5, #858585); }
.info .login { justify-content: flex-start; width: 88px; padding-left: 3px; gap: 4px; }
.login .arrow { margin-left: auto; margin-right: 3px; }
.info .split { width: 27px; gap: 4px; }
.info .help { width: 34px; }
.aero { display: flex; justify-content: flex-end; width: 89px; padding-right: 2px; background: linear-gradient(90deg, #d5ecf8, #b4cfe8 50%, #e4f5fb); }
.window-buttons { display: flex; height: 13px; border: 1px solid #7993ad; border-top: 0; border-radius: 0 0 4px 4px; background: #e5f0f8; }
.window-buttons button { width: 24px; border-right: 1px solid #8fa6bc; }
.window-buttons .close { width: 28px; border: 0; }
.window-buttons svg, .mdi svg { width: 9px; height: 9px; }
.menubar { display: flex; align-items: center; padding-left: 10px; gap: 18px; background: linear-gradient(#4e4e4e, #8c8c8c); }
.mdi { display: flex; gap: 3px; margin-left: auto; padding-right: 2px; }

/* Ribbon */
.tabs { display: flex; flex: none; align-items: stretch; height: 15px; padding: 2px 3px 0; background: #4a4a4a; color: #c5c5c5; }
.tabs button { padding: 0 7px; }
.tabs .active { margin-right: 1px; border-radius: 2px 2px 0 0; background: linear-gradient(#858585, #5c5c5c); color: #fff; }
.tabs .cam { gap: 4px; margin-left: 8px; }
.camera { width: 12px; height: 7px; }
.ribbon { display: grid; grid-template-columns: 155fr 166fr 115fr 184fr 72fr 147fr 50fr 55fr 56fr; flex: none; height: 73px; border-bottom: 1px solid #6a6a6a; background: #5a5a5a; }
.panel { display: flex; flex-direction: column; min-width: 0; border-right: 1px solid #444; box-shadow: inset 1px 0 #666; }
.tools { display: flex; flex: 1; padding: 3px 2px 0; }
.spaced { padding-left: 4px; }
.panel h2 { display: flex; align-items: center; justify-content: center; gap: 5px; height: 14px; background: linear-gradient(#484848, #565656); }
.big { flex-direction: column; justify-content: flex-start; width: 30px; line-height: 13px; }
.big > svg:first-child { width: 22px; height: 22px; margin: 1px 0 4px; }
.big .arrow { margin-top: 1px; }
.slim { width: 28px; }
.col { display: flex; flex-direction: column; }
.col > button { justify-content: flex-start; gap: 4px; height: 18px; padding: 0 5px 0 4px; }
.tight > button { padding: 0 3px 0 2px; }
.tight > .pressed { padding: 0 3px; background: #5378ae; outline: 1px solid #7ca0d2; outline-offset: -1px; }
.last { margin-left: 2px; }
.wide-arrow .arrow { margin-left: 4px; }
.grow { flex: 1; min-width: 0; }
.combo { display: flex; align-items: center; gap: 4px; height: 16px; margin: 1px 0; padding: 0 3px 0 4px; border: 1px solid #3f3f3f; background: linear-gradient(#505050, #686868); }
.combo select { flex: 1; }
.swatch { width: 10px; height: 10px; background: #fff; }
.layer .ic { width: 10px; height: 10px; }
.color { padding-left: 8px; }
.color select { padding-left: 4px; }
.sampled { gap: 1px; }
.sample { width: 43px; height: 1px; background: #ccc; }
.icons { display: flex; padding-left: 1px; }
.icons button { height: 18px; padding: 0 3px; gap: 3px; }

/* File tabs */
.files { display: flex; flex: none; align-items: flex-end; height: 20px; padding-left: 12px; border-bottom: 2px solid #5c6166; background: #363636; color: #a9a9a9; }
.file { justify-content: flex-start; width: 93px; height: 16px; padding: 0 9px 0 11px; border-radius: 6px 8px 0 0; background: #545454; }
.file.active { justify-content: space-between; padding-left: 8px; background: linear-gradient(#777, #5c5c5c); color: #eee; }
.file.add { justify-content: center; width: 20px; height: 12px; margin: 0 0 2px 1px; padding: 0; color: #ddd; font-size: 13px; }
.x { color: #333; font-family: "DejaVu Sans", sans-serif; }

/* Drawing area */
.canvas { position: relative; flex: 1; min-height: 0; border-right: 5px solid #b3cdea; background: #212830; }
.view-label { padding: 5px 2px; }
.drawing { position: absolute; inset: 0; width: 100%; height: 100%; }
.ucs { position: absolute; left: 0; bottom: 0; width: 64px; height: 64px; fill: #d5d8da; font: 14px "Open Sans", sans-serif; }
.dynamic { position: absolute; left: 447px; top: 189px; display: flex; gap: 4px; }
.dyn-first { width: 52px; height: 16px; padding: 2px 7px 2px 23px; background: #fff; }
.dyn-first input { display: block; width: 22px; height: 12px; padding-left: 1px; background: #3399ff; color: #fff; }
.dyn-second { width: 53px; height: 16px; padding-left: 2px; border: 1px solid #c4c4c4; background: #8b8b8b; color: #111; }
.viewcube { position: absolute; right: 10px; top: 9px; display: grid; grid-template: ". n ." 12px "w c e" 46px ". s ." 12px / 9px 50px 9px; place-items: center; color: #b7bcc1; }
.n { grid-area: n; z-index: 1; }
.s { grid-area: s; z-index: 1; }
.w { grid-area: w; z-index: 1; }
.e { grid-area: e; z-index: 1; }
.ring { grid-area: c; display: grid; place-items: center; width: 62px; height: 62px; border: 6px solid #474d58; border-radius: 50%; }
.ring button { width: 26px; height: 26px; background: linear-gradient(135deg, #c8cacb, #b0b3b5); color: #4b5157; font-size: 18px; }
.wcs { position: absolute; right: 27px; top: 89px; gap: 4px; height: 13px; padding: 0 3px; border: 1px solid #b9bbc6; border-radius: 3px; background: #9698a3; color: #e4e5ea; }
.wcs i { width: 7px; height: 6px; border: 1px solid #a7a9b4; }
.navbar { position: absolute; right: 4px; top: 120px; width: 23px; height: 156px; }
.command { position: absolute; left: 219px; right: 228px; bottom: 0; font: 9px/12px "Liberation Mono", "Noto Sans CJK SC", monospace; }
.history { display: flex; flex-direction: column; align-items: flex-start; padding-left: 42px; }
.history p { height: 12px; padding: 0 1px; border-bottom: 1px solid #212830; background: #4a4e53; color: #c4c7ca; }
.prompt { display: flex; height: 18px; }
.handle { display: flex; align-items: center; gap: 6px; width: 40px; padding-left: 3px; background: linear-gradient(#4e4e4e, #777); }
.handle button { width: 10px; }
.handle svg { width: 10px; height: 10px; }
.grip { width: 3px; height: 12px; background: repeating-linear-gradient(#aaa 0 1px, transparent 1px 2px); }
.line { display: flex; flex: 1; padding-left: 3px; background: #fff; color: #222; line-height: 18px; white-space: nowrap; }
.entry { width: 208px; }
.ask { margin-left: 3px; }
.line button { display: inline; background: #d4d4d4; line-height: 14px; }
.line em { color: #2020e0; font-style: normal; }
.recent { width: 14px; height: 10px; vertical-align: middle; }
.line .arrow { margin: 0 4px 0 0; vertical-align: middle; }

/* Status bar */
.status { display: flex; flex: none; align-items: flex-start; height: 23px; padding-left: 9px; background: #343434; }
.layout { width: 38px; height: 14px; margin: 1px 1px 0 0; border-radius: 2px 2px 7px 7px; background: #4b4b4b; color: #a8a8a8; }
.layout.active { width: 34px; background: linear-gradient(#9a9a9a, #6b6b6b); color: #fff; font-weight: bold; }
.layout.add { width: 20px; color: #ddd; font-size: 12px; }
.toggles { display: flex; gap: 1px; margin-left: auto; height: 22px; }
.toggles > div { display: flex; align-items: center; border: 1px solid #686868; border-left: 0; background: #474747; }
.toggles button { width: 18px; height: 20px; color: #c4c4c4; }
.toggles .on { color: #2f86ee; }
.toggles svg { width: 12px; height: 12px; }
.toggles .dd { width: 9px; }
.toggles .dd svg { width: 5px; height: 3px; }
.toggles .model { width: 20px; color: #fff; font-weight: bold; }
.toggles .ratio { color: #fff; font-weight: bold; }
.taskbar { display: flex; flex: none; gap: 3px; height: 5px; padding-left: 180px; border-top: 1px solid #8fc0e4; background: linear-gradient(90deg, #6fa6c8, #2b83c4 10%, #2a84c8 40%, #1d70b8 50%, #7fb8e6 66%, #175a9e 72%, #15508e); }
.task { width: 43px; padding: 0 11px; background: #cfe3ef; }
.task::before { content: ""; display: block; height: 4px; border-radius: 5px 5px 0 0; }
.amber::before { background: #f0b020; }
.red::before { background: #e39a94; }
.green::before { background: #10d020; }

/* Object snap menu */
.context { position: absolute; left: 332px; top: 161px; width: 139px; padding: 2px 0; border: 1px solid #a5a5a5; background: linear-gradient(90deg, #f0f0f0 20px, #dcdcdc 20px, #fff 21px, #f0f0f0 22px); color: #222; }
.context button { justify-content: flex-start; width: 100%; height: 16px; }
.context svg { width: 12px; height: 12px; margin: 0 9px 0 4px; fill: none; stroke: #e0653a; stroke-width: 1.2; }
.context u { text-underline-offset: 1px; }
.context .sub::after { content: ""; margin: 0 7px 0 auto; border: 3px solid transparent; border-left: 4px solid #111; border-right: 0; }
.sep { height: 6px; margin-left: 22px; border-top: 3px solid transparent; border-bottom: 2px solid transparent; background: #dcdcdc; background-clip: padding-box; }
.pointer { position: absolute; inset: 0; width: 100%; height: 100%; pointer-events: none; }

/* Brand plate */
.brand { position: absolute; right: 39px; bottom: 20px; display: flex; align-items: center; gap: 9px; width: 195px; height: 97px; padding: 0 6px; background: #232f58; color: #dedede; font-family: Roboto, "Noto Sans CJK SC", sans-serif; }
.brand svg { width: 46px; height: 62px; }
.brand div { display: flex; flex-direction: column; white-space: nowrap; }
.brand strong { display: flex; align-items: center; font-size: 29px; font-weight: 500; line-height: 38px; }
.brand .latin { font-size: 34px; font-weight: 400; }
.brand .domain { font-size: 26px; font-weight: 300; line-height: 30px; }
```
